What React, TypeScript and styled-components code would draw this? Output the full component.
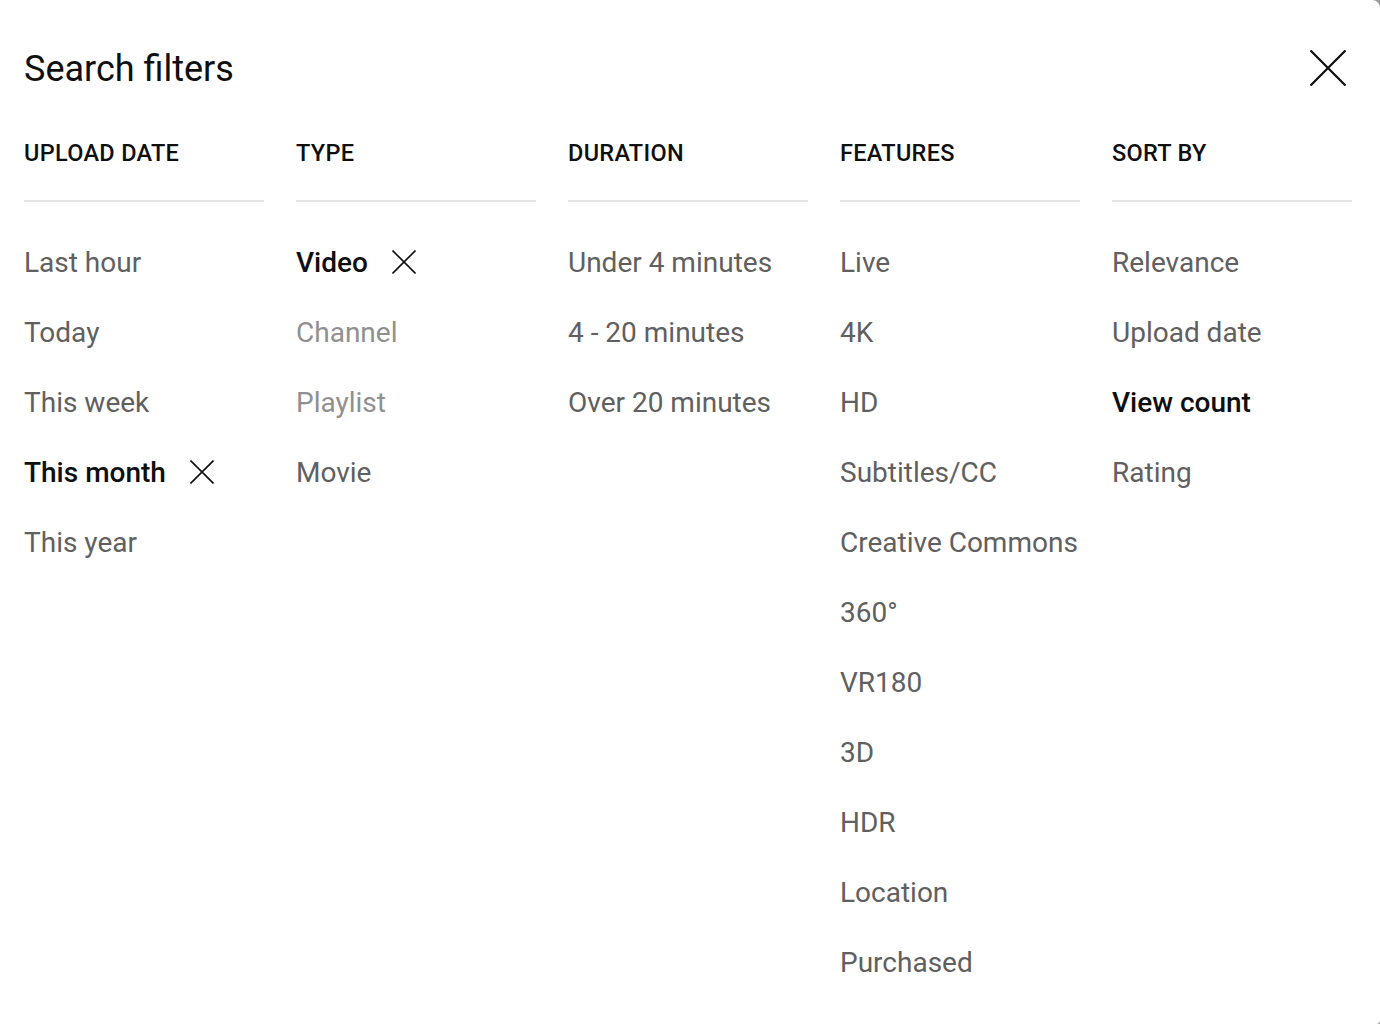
import React from "react";
import styled, { createGlobalStyle } from "styled-components";

const GlobalStyle = createGlobalStyle`
  html, body {
    margin: 0;
    padding: 0;
    background: #9a9a9a;
  }
  body {
    font-family: Roboto, "Noto Sans", Arial, sans-serif;
    -webkit-font-smoothing: antialiased;
  }
`;

const Dialog = styled.div`
  width: 1380px;
  height: 1024px;
  box-sizing: border-box;
  background: #ffffff;
  border-radius: 0 8px 4px 0;
  padding: 45px 28px 0 24px;
  overflow: hidden;
`;

const HeaderRow = styled.div`
  display: flex;
  align-items: center;
  justify-content: space-between;
  height: 48px;
`;

const Title = styled.h2`
  margin: 0;
  font-size: 36px;
  line-height: 48px;
  font-weight: 400;
  color: #0f0f0f;
`;

const CloseButton = styled.button`
  width: 48px;
  height: 48px;
  margin-top: -2px;
  padding: 0;
  border: none;
  background: transparent;
  display: flex;
  align-items: center;
  justify-content: center;
  cursor: pointer;
`;

const Columns = styled.div`
  display: grid;
  grid-template-columns: repeat(5, 240px);
  column-gap: 32px;
  margin-top: 45px;
`;

const Column = styled.div`
  display: flex;
  flex-direction: column;
`;

const ColumnTitle = styled.div`
  font-size: 23.5px;
  line-height: 30px;
  font-weight: 500;
  color: #0f0f0f;
  letter-spacing: 0.3px;
  padding-bottom: 32px;
  border-bottom: 2px solid #e5e5e5;
  margin-bottom: 25px;
`;

type ItemState = "normal" | "selected" | "disabled";

const Option = styled.div<{ $state: ItemState }>`
  height: 70px;
  display: flex;
  align-items: center;
  gap: 24px;
  font-size: 28px;
  white-space: nowrap;
  font-weight: ${(p) => (p.$state === "selected" ? 500 : 400)};
  color: ${(p) =>
    p.$state === "selected"
      ? "#0f0f0f"
      : p.$state === "disabled"
      ? "#909090"
      : "#606060"};
`;

const CrossIcon = ({ size, stroke }: { size: number; stroke: number }) => (
  <svg width={size} height={size} viewBox={`0 0 ${size} ${size}`} fill="none">
    <path
      d={`M0.5 0.5 L${size - 0.5} ${size - 0.5} M${size - 0.5} 0.5 L0.5 ${size - 0.5}`}
      stroke="#0f0f0f"
      strokeWidth={stroke}
    />
  </svg>
);

type Entry = { label: string; state?: ItemState };

const groups: { title: string; items: Entry[] }[] = [
  {
    title: "UPLOAD DATE",
    items: [
      { label: "Last hour" },
      { label: "Today" },
      { label: "This week" },
      { label: "This month", state: "selected" },
      { label: "This year" },
    ],
  },
  {
    title: "TYPE",
    items: [
      { label: "Video", state: "selected" },
      { label: "Channel", state: "disabled" },
      { label: "Playlist", state: "disabled" },
      { label: "Movie" },
    ],
  },
  {
    title: "DURATION",
    items: [
      { label: "Under 4 minutes" },
      { label: "4 - 20 minutes" },
      { label: "Over 20 minutes" },
    ],
  },
  {
    title: "FEATURES",
    items: [
      { label: "Live" },
      { label: "4K" },
      { label: "HD" },
      { label: "Subtitles/CC" },
      { label: "Creative Commons" },
      { label: "360°" },
      { label: "VR180" },
      { label: "3D" },
      { label: "HDR" },
      { label: "Location" },
      { label: "Purchased" },
    ],
  },
  {
    title: "SORT BY",
    items: [
      { label: "Relevance" },
      { label: "Upload date" },
      { label: "View count", state: "selected" },
      { label: "Rating" },
    ],
  },
];

export default function App() {
  return (
    <>
      <GlobalStyle />
      <Dialog>
        <HeaderRow>
          <Title>Search filters</Title>
          <CloseButton aria-label="Close">
            <CrossIcon size={36} stroke={2.2} />
          </CloseButton>
        </HeaderRow>
        <Columns>
          {groups.map((g) => (
            <Column key={g.title}>
              <ColumnTitle>{g.title}</ColumnTitle>
              {g.items.map((it) => {
                const state = it.state ?? "normal";
                const removable = state === "selected" && g.title !== "SORT BY";
                return (
                  <Option key={it.label} $state={state}>
                    {it.label}
                    {removable && <CrossIcon size={24} stroke={1.6} />}
                  </Option>
                );
              })}
            </Column>
          ))}
        </Columns>
      </Dialog>
    </>
  );
}
